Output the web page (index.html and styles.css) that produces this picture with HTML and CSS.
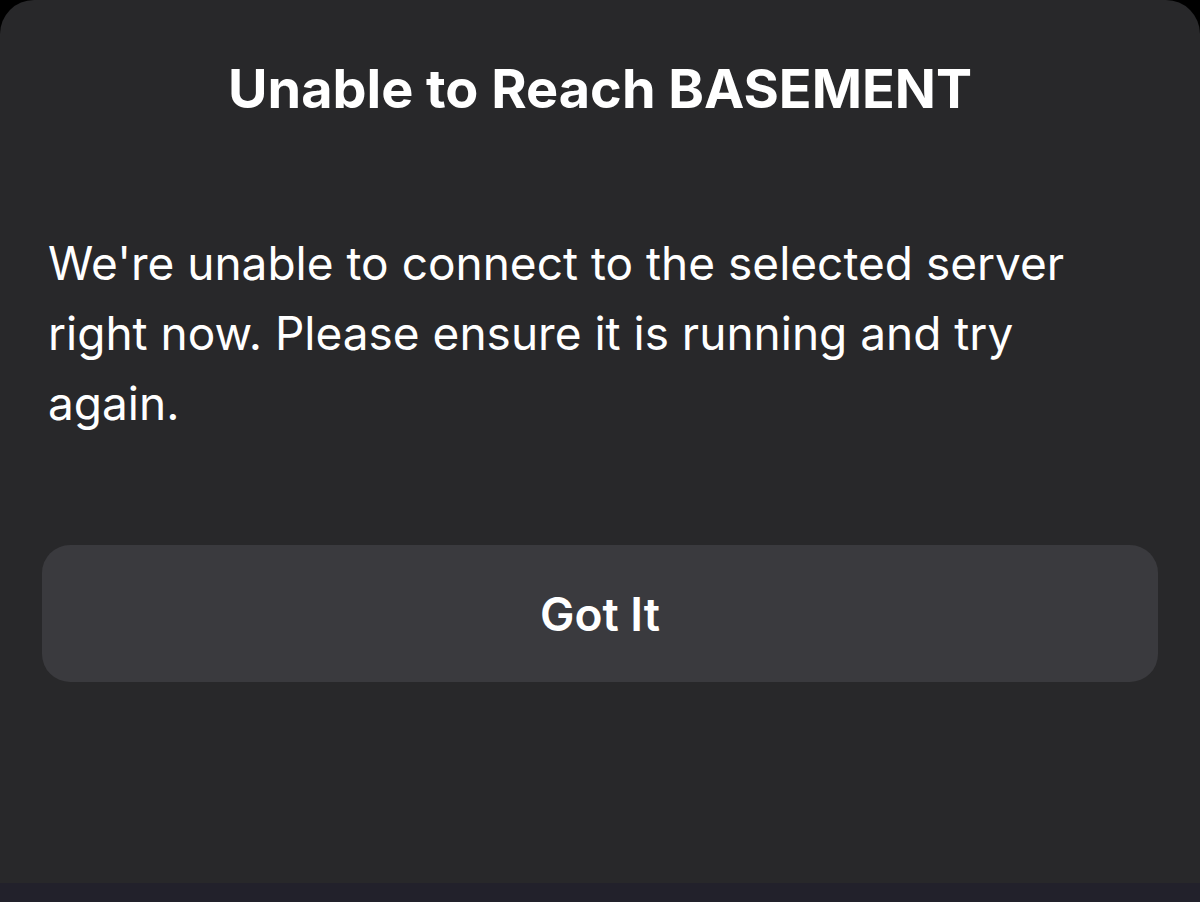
FILE: index.html
```html
<!DOCTYPE html>
<html lang="en">

<head>
    <meta charset="utf-8">
    <meta name="viewport" content="width=device-width, initial-scale=1.0">
    <title>Unable to Reach BASEMENT</title>
    <link rel="stylesheet" href="styles.css">
</head>

<body>
    <section class="sheet">
        <h1 class="sheet_title">Unable to Reach BASEMENT</h1>

        <p class="sheet_txt">We're unable to connect to the selected server right now. Please ensure it is running and try again.</p>

        <button class="sheet_btn">Got It</button>
    </section>

    <div class="bottom_bar"></div>
</body>

</html>
```

FILE: styles.css
```css
* {
    box-sizing: border-box;
    margin: 0;
    padding: 0;
    font-family: 'Inter', 'Noto Sans', sans-serif;
}

html,
body {
    height: 100%;
}

body {
    background-color: #000;
    display: flex;
    flex-direction: column;
    overflow: hidden;
}

.sheet {
    flex: 1;
    background-color: #28282a;
    border-radius: 34px 34px 0 0;
    padding: 53px 42px 0 42px;
    display: flex;
    flex-direction: column;
}

.sheet_title {
    text-align: center;
    color: #fff;
    font-size: 54px;
    font-weight: 700;
    line-height: 72px;
}

.sheet_txt {
    color: #fff;
    font-size: 46px;
    font-weight: 400;
    line-height: 70px;
    margin: 103px 0 0 6px;
    padding-right: 60px;
}

.sheet_btn {
    margin-top: 107px;
    height: 137px;
    width: 100%;
    border: none;
    border-radius: 28px;
    background-color: #3a3a3e;
    color: #fff;
    font-size: 46px;
    font-weight: 600;
    cursor: pointer;
}

.bottom_bar {
    height: 19px;
    background-color: #22212b;
}
```
